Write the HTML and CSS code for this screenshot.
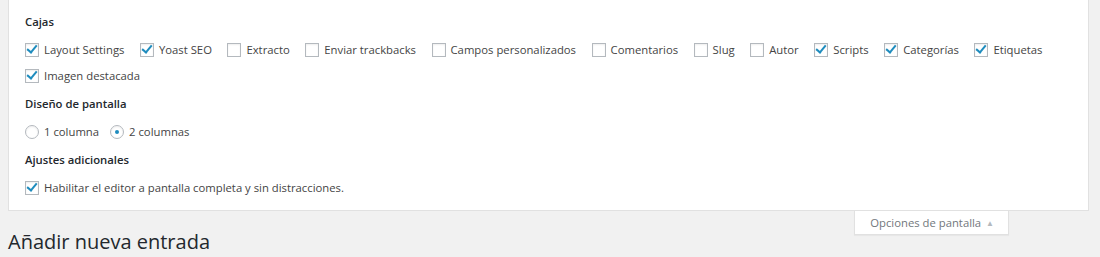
FILE: index.html
```html
<!DOCTYPE html>
<html lang="es">
<head>
<meta charset="UTF-8">
<title>Añadir nueva entrada</title>
<link rel="stylesheet" href="styles.css">
</head>
<body>

<div class="wrap">
    <div class="screen-options">
        <h5>Cajas</h5>
        <div class="prefs">
            <label><input type="checkbox" checked> Layout Settings</label>
            <label><input type="checkbox" checked> Yoast SEO</label>
            <label><input type="checkbox"> Extracto</label>
            <label><input type="checkbox"> Enviar trackbacks</label>
            <label><input type="checkbox"> Campos personalizados</label>
            <label><input type="checkbox"> Comentarios</label>
            <label><input type="checkbox"> Slug</label>
            <label><input type="checkbox"> Autor</label>
            <label><input type="checkbox" checked> Scripts</label>
            <label><input type="checkbox" checked> Categorías</label>
            <label><input type="checkbox" checked> Etiquetas</label>
            <label><input type="checkbox" checked> Imagen destacada</label>
        </div>

        <h5>Diseño de pantalla</h5>
        <div class="prefs radios">
            <label><input type="radio" name="columns"> 1 columna</label>
            <label><input type="radio" name="columns" checked> 2 columnas</label>
        </div>

        <h5>Ajustes adicionales</h5>
        <div class="prefs">
            <label><input type="checkbox" checked> Habilitar el editor a pantalla completa y sin distracciones.</label>
        </div>
    </div>

    <div class="tabs">
        <button type="button" class="tab">Opciones de pantalla <span class="arrow">&#9650;</span></button>
    </div>

    <h1>Añadir nueva entrada</h1>
</div>

</body>
</html>
```

FILE: styles.css
```css
body {
    margin: 0;
    background-color: #f1f1f1;
    font-family: "Open Sans", sans-serif;
    font-size: 11.3px;
    color: #444;
}

.wrap {
    padding: 0 11px 0 8px;
}

.screen-options {
    background-color: #fff;
    border: 1px solid #e1e1e1;
    border-top: none;
    padding: 12px 16px 9px;
}

h5 {
    margin: 0 0 5px;
    font-size: 11.3px;
    font-weight: 600;
    line-height: 20px;
    color: #23282d;
}

.prefs {
    display: flex;
    flex-wrap: wrap;
    margin-bottom: 5px;
}

.prefs:last-child {
    margin-bottom: 0;
}

.prefs label {
    display: flex;
    align-items: center;
    line-height: 26px;
    margin-right: 15.5px;
    white-space: nowrap;
}

.radios label {
    margin-right: 11px;
}

input {
    -webkit-appearance: none;
    appearance: none;
    position: relative;
    width: 14px;
    height: 14px;
    margin: 0 5px 0 0;
    border: 1px solid #b4b9be;
    background-color: #fff;
    box-shadow: inset 0 1px 2px rgba(0, 0, 0, 0.07);
    box-sizing: border-box;
    flex-shrink: 0;
}

input[type="radio"] {
    border-radius: 50%;
}

input[type="checkbox"]:checked::before {
    content: "";
    position: absolute;
    left: 3px;
    top: -1px;
    width: 4px;
    height: 8px;
    border-right: 2px solid #1e8cbe;
    border-bottom: 2px solid #1e8cbe;
    transform: rotate(40deg);
}

input[type="radio"]:checked::before {
    content: "";
    position: absolute;
    left: 4px;
    top: 4px;
    width: 4px;
    height: 4px;
    border-radius: 50%;
    background-color: #1e8cbe;
}

.tabs {
    display: flex;
    justify-content: flex-end;
    margin-right: 80px;
}

.tab {
    font-family: "Open Sans", sans-serif;
    font-size: 11.3px;
    color: #72777c;
    background-color: #fff;
    border: 1px solid #e1e1e1;
    border-top: none;
    padding: 4px 14px 3px 15px;
    line-height: 16px;
    box-shadow: 0 1px 1px rgba(0, 0, 0, 0.04);
    cursor: pointer;
}

.arrow {
    font-size: 8px;
    color: #b4b9be;
    margin-left: 2px;
    vertical-align: 1px;
}

h1 {
    margin: -6px 0 0;
    font-size: 20px;
    font-weight: 400;
    line-height: 25px;
    color: #23282d;
}
```
